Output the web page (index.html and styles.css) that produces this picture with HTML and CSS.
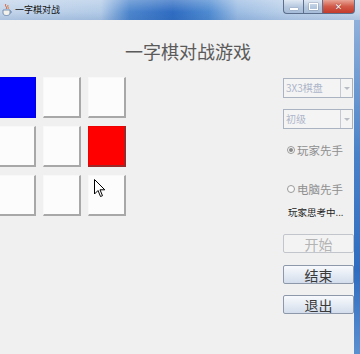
FILE: index.html
```html
<!DOCTYPE html>
<html lang="zh-CN">
<head>
  <meta charset="UTF-8" />
  <title>一字棋对战</title>
  <link rel="stylesheet" href="styles.css">
</head>
<body>
  <div class="window">
    <!-- Title bar -->
    <div class="titlebar">
      <svg class="app-icon" width="10" height="12" viewBox="0 0 10 12">
        <path d="M4 0 C2 2 6 3 4 5" fill="none" stroke="#d9502a" stroke-width="1"/>
        <path d="M6 1 C5 3 7 3 6 5" fill="none" stroke="#e07a30" stroke-width="1"/>
        <path d="M1 6 H8 V9 C8 11 6 11.5 4.5 11.5 C3 11.5 1 11 1 9 Z" fill="#f4f0ea" stroke="#5d7fa8" stroke-width="0.8"/>
        <path d="M8 7 C10 7 10 9 8 9" fill="none" stroke="#5d7fa8" stroke-width="0.8"/>
      </svg>
      <span class="title">一字棋对战</span>
      <div class="controls">
        <div class="ctl ctl-min"><span></span></div>
        <div class="ctl ctl-max"><span></span></div>
        <div class="ctl ctl-close">✕</div>
      </div>
    </div>

    <div class="frame-body">
      <!-- Client area -->
      <div class="client">
        <div class="heading">一字棋对战游戏</div>

        <div class="main-row">
          <!-- 3x3 board -->
          <div class="board">
            <div class="cell blue"></div>
            <div class="cell"></div>
            <div class="cell"></div>
            <div class="cell"></div>
            <div class="cell"></div>
            <div class="cell red"></div>
            <div class="cell"></div>
            <div class="cell"></div>
            <div class="cell"></div>
          </div>

          <!-- Controls panel -->
          <div class="panel">
            <div class="combo">
              <span class="combo-text">3X3棋盘</span>
              <span class="combo-arrow"></span>
            </div>
            <div class="combo second">
              <span class="combo-text">初级</span>
              <span class="combo-arrow"></span>
            </div>
            <label class="radio first"><span class="dot checked"></span>玩家先手</label>
            <label class="radio second"><span class="dot"></span>电脑先手</label>
            <div class="status">玩家思考中...</div>
            <button class="btn start" disabled>开始</button>
            <button class="btn stop">结束</button>
            <button class="btn quit">退出</button>
          </div>
        </div>
      </div>
      <div class="frame-right"></div>
    </div>
  </div>

  <!-- mouse pointer over the board -->
  <svg class="cursor" width="12" height="19" viewBox="0 0 12 19">
    <path d="M0.5 0.5 L0.5 15 L4 11.5 L6.5 17.5 L8.5 16.7 L6 10.8 L10.8 10.8 Z" fill="#fff" stroke="#000" stroke-width="1"/>
  </svg>
</body>
</html>
```

FILE: styles.css
```css
:root {
  --client-bg: #f0f0f0;
  --cjk: "Noto Sans CJK SC", "Noto Sans", sans-serif;
}

html, body {
  margin: 0;
  padding: 0;
  height: 100%;
}

body {
  font-family: var(--cjk);
  background: var(--client-bg);
  overflow: hidden;
  position: relative;
}

.window {
  display: flex;
  flex-direction: column;
  height: 100vh;
}

/* Title bar (Aero glass look) */
.titlebar {
  height: 20px;
  display: flex;
  align-items: flex-start;
  background:
    linear-gradient(180deg, rgba(255,255,255,0.25), rgba(255,255,255,0) 60%, rgba(40,90,160,0.15)),
    linear-gradient(90deg, #c4d5ea 0%, #b3cbe7 28%, #4d86cd 36%, #2f6cc2 48%, #4f8bd1 58%, #9dbde3 66%, #bcd1ea 80%, #c6d7eb 100%);
}
.app-icon {
  margin: 4px 0 0 2px;
}
.title {
  margin: 3px 0 0 3px;
  font-size: 9px;
  line-height: 14px;
  color: #111;
}
.controls {
  margin-left: auto;
  margin-right: 5px;
  display: flex;
}
.ctl {
  height: 14px;
  box-sizing: border-box;
  border: 1px solid #5c6f8c;
  border-top: none;
  display: flex;
  align-items: center;
  justify-content: center;
}
.ctl-min,
.ctl-max {
  width: 20px;
  background: linear-gradient(180deg, #dfe8f3, #b4c7de 55%, #a6bcd8);
}
.ctl-min {
  border-radius: 0 0 0 4px;
  border-right: none;
}
.ctl-min span {
  width: 8px;
  height: 2px;
  margin-top: 5px;
  background: #fff;
  box-shadow: 0 0 1px #445;
}
.ctl-max span {
  width: 7px;
  height: 5px;
  border: 1px solid #fff;
  box-shadow: 0 0 1px #445;
}
.ctl-close {
  width: 32px;
  border-left: none;
  border-radius: 0 0 4px 0;
  background: linear-gradient(180deg, #e9a597, #d25a48 50%, #c43b2c);
  color: #fff;
  font-family: "DejaVu Sans", sans-serif;
  font-size: 9px;
  font-weight: bold;
  text-shadow: 0 0 1px #600;
}

.frame-body {
  flex: 1;
  display: flex;
}

/* Client area */
.client {
  flex: 1;
  background: var(--client-bg);
  display: flex;
  flex-direction: column;
}
.heading {
  padding: 22px 0 0 125px;
  font-size: 18px;
  line-height: 18px;
  color: #5a5a5a;
}
.main-row {
  display: flex;
  align-items: flex-start;
  margin-top: 17px;
}

/* Board */
.board {
  margin-left: -2px;
  display: grid;
  grid-template-columns: repeat(3, 38px);
  grid-auto-rows: 41px;
  column-gap: 7px;
  row-gap: 8px;
}
.cell {
  background: #fcfcfc;
  border-right: 2px solid #a8a8a8;
  border-bottom: 2px solid #a8a8a8;
  border-top: 1px solid #f8f8f8;
  border-left: 1px solid #f8f8f8;
}
.cell.blue {
  background: #0000ff;
  border-color: #0000ee;
}
.cell.red {
  background: #ff0000;
  border-color: #ee0000 #9a2a2a #9a2a2a #ee0000;
}

/* Side panel */
.panel {
  margin-left: auto;
  width: 71px;
  padding-top: 1px;
  display: flex;
  flex-direction: column;
  align-items: flex-start;
}
.combo {
  width: 70px;
  height: 20px;
  box-sizing: border-box;
  border: 1px solid #aab3c2;
  background: #f4f4f4;
  display: flex;
}
.combo.second {
  margin-top: 11px;
}
.combo-text {
  flex: 1;
  padding-left: 2px;
  font-size: 10px;
  line-height: 18px;
  color: #aeb6ca;
}
.combo-arrow {
  width: 11px;
  border-left: 1px solid #c4cad4;
  position: relative;
}
.combo-arrow::after {
  content: "";
  position: absolute;
  left: 3px;
  top: 8px;
  border-left: 3px solid transparent;
  border-right: 3px solid transparent;
  border-top: 3px solid #b8bcc4;
}

.radio {
  display: flex;
  align-items: center;
  height: 16px;
  padding-left: 4px;
  font-size: 11.5px;
  color: #8e8e8e;
}
.radio.first {
  margin-top: 13px;
}
.radio.second {
  margin-top: 23px;
}
.dot {
  width: 8px;
  height: 8px;
  box-sizing: border-box;
  border: 1px solid #9a9a9a;
  border-radius: 50%;
  background: #f8f8f8;
  margin-right: 2px;
  position: relative;
}
.dot.checked::after {
  content: "";
  position: absolute;
  left: 1px;
  top: 1px;
  width: 4px;
  height: 4px;
  border-radius: 50%;
  background: #8a8a8a;
}

.status {
  margin-top: 8px;
  padding-left: 5px;
  font-size: 9.5px;
  line-height: 14px;
  color: #222;
}

.btn {
  width: 71px;
  height: 19px;
  box-sizing: border-box;
  padding: 0;
  font-family: var(--cjk);
  font-size: 14px;
  line-height: 16px;
  color: #3a3a3a;
  border: 1px solid #8d99ab;
  border-radius: 2px;
  background: linear-gradient(180deg, #f7f9fc, #e6ecf5 50%, #d3ddec);
}
.btn.start {
  margin-top: 15px;
  color: #b4b4b4;
  border-color: #c2c6cc;
  background: #f3f3f3;
}
.btn.stop {
  margin-top: 12px;
}
.btn.quit {
  margin-top: 11px;
}

/* Window frame edge on the right */
.frame-right {
  width: 6px;
  background: linear-gradient(180deg, #8fb0da, #4a82c8 40%, #2f6cc0 75%, #5b90d0);
}

.cursor {
  position: absolute;
  left: 94px;
  top: 179px;
}
```
